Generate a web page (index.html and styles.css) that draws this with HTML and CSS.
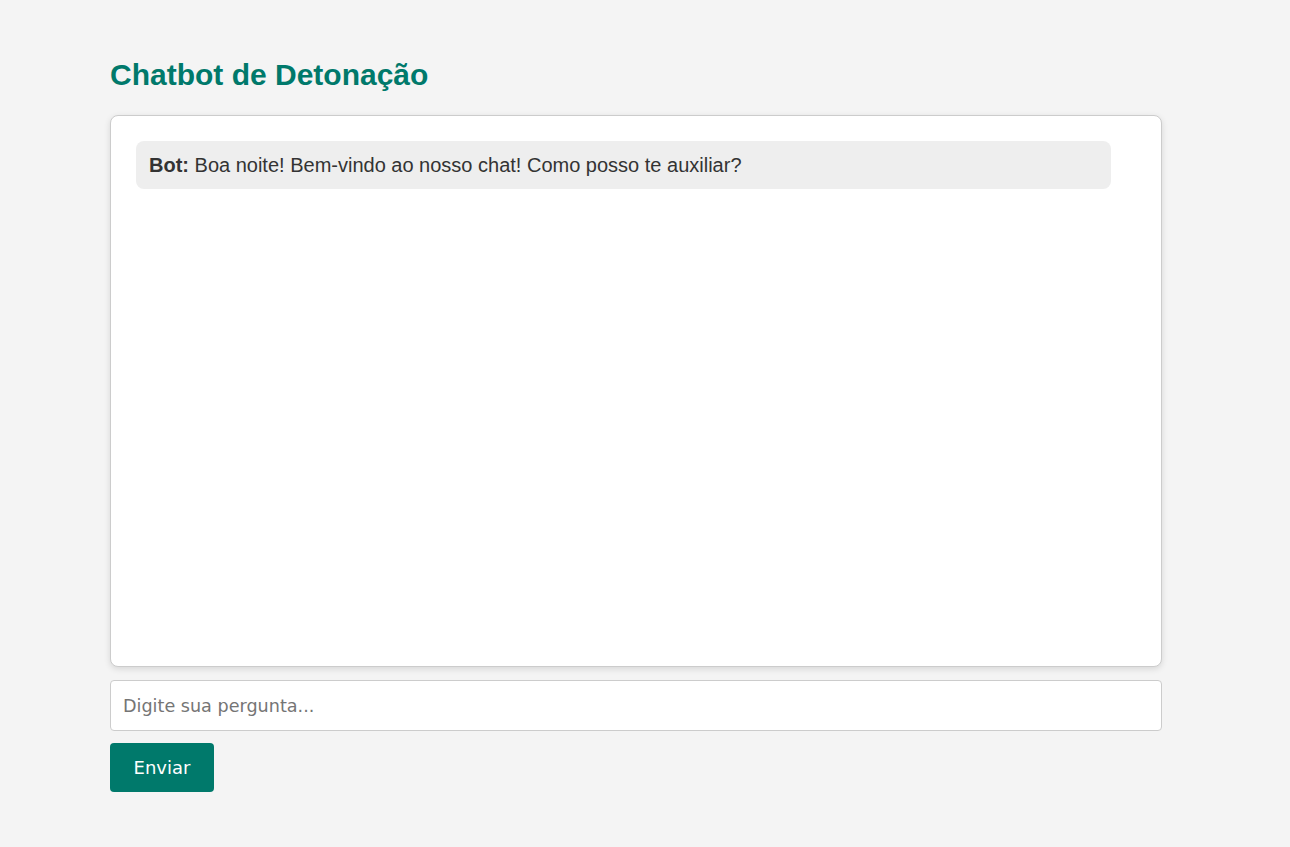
FILE: index.html
```html
<!DOCTYPE html>
<html lang="pt">
<head>
<meta charset="utf-8">
<title>Chatbot de Detonação</title>
<link rel="stylesheet" href="styles.css">
</head>
<body>
<main class="page">
  <h1 class="title">Chatbot de Detonação</h1>
  <div class="chat-box">
    <div class="message bot"><strong>Bot:</strong> Boa noite! Bem-vindo ao nosso chat! Como posso te auxiliar?</div>
  </div>
  <input class="chat-input" type="text" placeholder="Digite sua pergunta...">
  <button class="send-btn" type="button">Enviar</button>
</main>
</body>
</html>
```
FILE: styles.css
```css
html, body {
  margin: 0;
  padding: 0;
  background: #f4f4f4;
}
body {
  font-family: "Liberation Sans", Arial, sans-serif;
  color: #333;
}
.page {
  width: 1052px;
  margin-left: 110px;
  padding-top: 56px;
  display: flex;
  flex-direction: column;
  align-items: flex-start;
}
.title {
  margin: 0 0 22px 0;
  font-size: 30px;
  line-height: 37px;
  font-weight: bold;
  color: #00796b;
}
.chat-box {
  box-sizing: border-box;
  width: 1052px;
  height: 552px;
  background: #fff;
  border: 1px solid #ccc;
  border-radius: 8px;
  box-shadow: 0 2px 6px rgba(0,0,0,0.12);
  padding: 25px 50px 25px 25px;
}
.message {
  background: #eee;
  border-radius: 8px;
  padding: 12px 13px;
  font-size: 20px;
  line-height: 24px;
  color: #333;
}
.chat-input {
  box-sizing: border-box;
  width: 1052px;
  height: 51px;
  margin-top: 13px;
  padding: 0 12px;
  border: 1px solid #ccc;
  border-radius: 4px;
  background: #fff;
  font-family: "DejaVu Sans", Tahoma, sans-serif;
  font-size: 17.6px;
  color: #333;
  outline: none;
}
.chat-input::placeholder {
  color: #757575;
}
.send-btn {
  margin-top: 12px;
  width: 104px;
  height: 49px;
  border: none;
  border-radius: 4px;
  background: #00796b;
  color: #fff;
  font-family: "DejaVu Sans", Tahoma, sans-serif;
  font-size: 18px;
  cursor: pointer;
}
```
